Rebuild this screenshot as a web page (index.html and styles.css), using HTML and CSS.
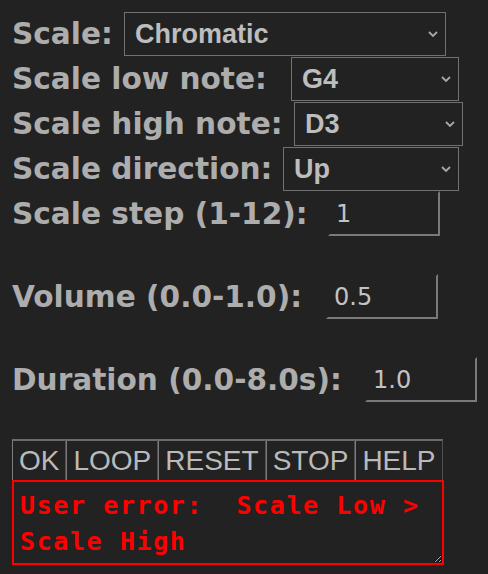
FILE: index.html
```html
<!DOCTYPE html>
<html lang="en">
<head>
<meta charset="utf-8">
<title>Scale player</title>
<link rel="stylesheet" href="styles.css">
</head>
<body>
<form class="panel">
  <div class="row r-scale">
    <label class="lbl" for="scale">Scale:</label>
    <span class="pick">
      <select id="scale"><option>Chromatic</option></select>
      <svg class="chev" viewBox="0 0 10 6"><path d="M1 1l4 4 4-4"/></svg>
    </span>
  </div>
  <div class="row r-low">
    <label class="lbl" for="low">Scale low note:</label>
    <span class="pick">
      <select id="low"><option>G4</option></select>
      <svg class="chev" viewBox="0 0 10 6"><path d="M1 1l4 4 4-4"/></svg>
    </span>
  </div>
  <div class="row r-high">
    <label class="lbl" for="high">Scale high note:</label>
    <span class="pick">
      <select id="high"><option>D3</option></select>
      <svg class="chev" viewBox="0 0 10 6"><path d="M1 1l4 4 4-4"/></svg>
    </span>
  </div>
  <div class="row r-dir">
    <label class="lbl" for="dir">Scale direction:</label>
    <span class="pick">
      <select id="dir"><option>Up</option></select>
      <svg class="chev" viewBox="0 0 10 6"><path d="M1 1l4 4 4-4"/></svg>
    </span>
  </div>
  <div class="row r-step">
    <label class="lbl" for="step">Scale step (1-12):</label>
    <input class="num" id="step" type="text" value="1">
  </div>
  <div class="row r-vol">
    <label class="lbl" for="vol">Volume (0.0-1.0):</label>
    <input class="num" id="vol" type="text" value="0.5">
  </div>
  <div class="row r-dur">
    <label class="lbl" for="dur">Duration (0.0-8.0s):</label>
    <input class="num" id="dur" type="text" value="1.0">
  </div>
  <div class="btns">
    <button type="button" class="btn">OK</button><button type="button" class="btn">LOOP</button><button type="button" class="btn">RESET</button><button type="button" class="btn">STOP</button><button type="button" class="btn">HELP</button>
  </div>
  <textarea class="err" spellcheck="false">User error:  Scale Low &gt;
Scale High</textarea>
</form>
</body>
</html>
```
FILE: styles.css
```css
html {
  color-scheme: dark;
  background: #222222;
}
body {
  margin: 0;
  padding: 11px 0 0 12px;
  height: 574px;
  box-sizing: border-box;
  overflow: hidden;
  background: #222222;
}
.panel {
  display: flex;
  flex-direction: column;
  align-items: flex-start;
}
.row {
  display: flex;
  align-items: center;
  height: 45px;
}
.lbl {
  flex: none;
  font: bold 29.6px "DejaVu Sans", Verdana, sans-serif;
  color: #adadad;
  white-space: nowrap;
}
.r-scale .lbl { width: 112px; }
.r-low .lbl { width: 279px; }
.r-high .lbl { width: 282px; }
.r-dir .lbl { width: 271px; }
.r-step .lbl { width: 316px; }
.r-vol .lbl { width: 314px; }
.r-dur .lbl { width: 353px; }

.pick {
  position: relative;
  display: block;
  flex: none;
  height: 44px;
}
.r-scale .pick { width: 322px; }
.r-low .pick { width: 168px; }
.r-high .pick { width: 169px; }
.r-dir .pick { width: 176px; }

.pick select {
  appearance: none;
  -webkit-appearance: none;
  display: block;
  width: 100%;
  height: 100%;
  box-sizing: border-box;
  margin: 0;
  padding: 0 0 0 10px;
  background: #222222;
  border: 1px solid #717171;
  border-radius: 0;
  color: #bdbdbd;
  font: bold 27px "Liberation Sans", Arial, sans-serif;
  outline: none;
}
.chev {
  position: absolute;
  right: 8px;
  top: 19px;
  width: 10px;
  height: 6px;
  fill: none;
  stroke: #a8a8a8;
  stroke-width: 1.8;
  pointer-events: none;
}

.num {
  flex: none;
  width: 112px;
  height: 45px;
  box-sizing: border-box;
  margin: 0;
  padding: 0 0 0 6px;
  background: #222222;
  border: 2px solid;
  border-color: #222222 #7a7a7a #7a7a7a #222222;
  border-radius: 0;
  color: #c2c2c2;
  font: 24px "DejaVu Sans", Verdana, sans-serif;
  outline: none;
}

.r-vol,
.r-dur {
  margin-top: 38px;
}

.btns {
  display: flex;
  margin-top: 37px;
}
.btn {
  height: 41px;
  box-sizing: border-box;
  margin: 0;
  padding: 0 6px;
  background: #222222;
  border-style: solid;
  border-width: 2px 1px 0 1px;
  border-color: #6b6b6b #505050 #222222 #7c7c7c;
  border-radius: 0;
  color: #bababa;
  font: 28px "Liberation Sans", Arial, sans-serif;
  line-height: 1;
}

.err {
  display: block;
  width: 432px;
  height: 85px;
  box-sizing: border-box;
  margin: 0;
  padding: 6px;
  background: #222222;
  border: 2px solid #ff0000;
  border-radius: 0;
  color: #ff0000;
  font: bold 25px "DejaVu Sans Mono", monospace;
  letter-spacing: 1.6px;
  line-height: 36px;
  overflow: hidden;
  resize: both;
  outline: none;
}
```
